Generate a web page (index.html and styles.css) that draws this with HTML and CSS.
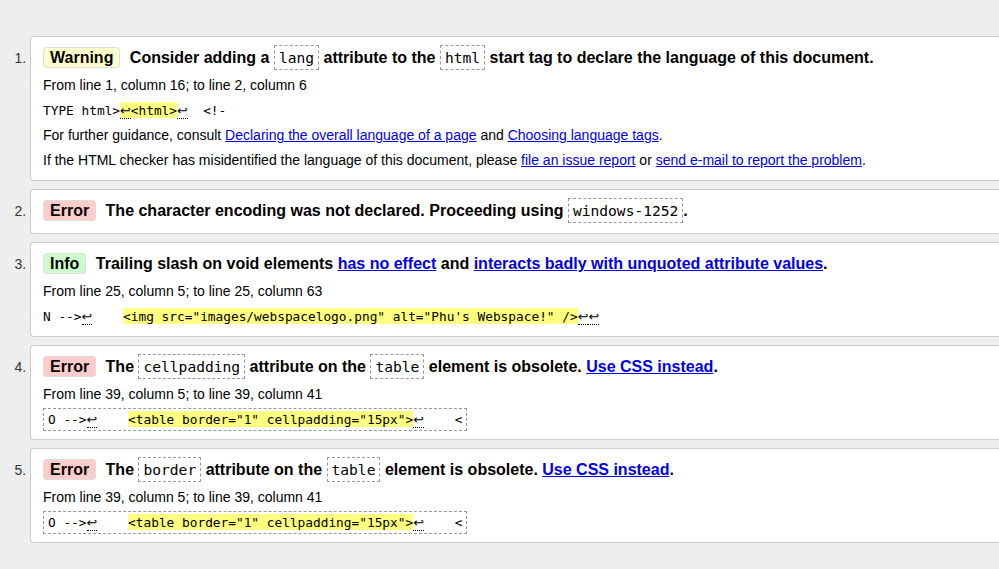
FILE: index.html
```html
<!DOCTYPE html>
<html lang="en">
<head>
<meta charset="utf-8">
<title>Validation results</title>
<link rel="stylesheet" href="styles.css">
</head>
<body>
<ol class="messages">
  <li class="msg">
    <p class="msg-head"><strong class="badge badge-warning">Warning</strong> <span>Consider adding a <code class="kw">lang</code> attribute to the <code class="kw">html</code> start tag to declare the language of this document.</span></p>
    <p class="loc">From line 1, column 16; to line 2, column 6</p>
    <p class="extract"><code class="src">TYPE html&gt;<mark><b class="lf">↩</b>&lt;html&gt;</mark><b class="lf">↩</b>  &lt;!-</code></p>
    <p class="note">For further guidance, consult <a href="#">Declaring the overall language of a page</a> and <a href="#">Choosing language tags</a>.</p>
    <p class="note">If the HTML checker has misidentified the language of this document, please <a href="#">file an issue report</a> or <a href="#">send e-mail to report the problem</a>.</p>
  </li>
  <li class="msg">
    <p class="msg-head"><strong class="badge badge-error">Error</strong> <span>The character encoding was not declared. Proceeding using <code class="kw">windows-1252</code>.</span></p>
  </li>
  <li class="msg">
    <p class="msg-head"><strong class="badge badge-info">Info</strong> <span>Trailing slash on void elements <a href="#">has no effect</a> and <a href="#">interacts badly with unquoted attribute values</a>.</span></p>
    <p class="loc">From line 25, column 5; to line 25, column 63</p>
    <p class="extract"><code class="src">N --&gt;<b class="lf">↩</b>    <mark>&lt;img src="images/webspacelogo.png" alt="Phu's Webspace!" /&gt;</mark><b class="lf">↩</b><b class="lf">↩</b></code></p>
  </li>
  <li class="msg">
    <p class="msg-head"><strong class="badge badge-error">Error</strong> <span>The <code class="kw">cellpadding</code> attribute on the <code class="kw">table</code> element is obsolete. <a href="#">Use CSS instead</a>.</span></p>
    <p class="loc">From line 39, column 5; to line 39, column 41</p>
    <p class="extract"><code class="src src-boxed">O --&gt;<b class="lf">↩</b>    <mark>&lt;table border="1" cellpadding="15px"&gt;</mark><b class="lf">↩</b>    &lt;</code></p>
  </li>
  <li class="msg">
    <p class="msg-head"><strong class="badge badge-error">Error</strong> <span>The <code class="kw">border</code> attribute on the <code class="kw">table</code> element is obsolete. <a href="#">Use CSS instead</a>.</span></p>
    <p class="loc">From line 39, column 5; to line 39, column 41</p>
    <p class="extract"><code class="src src-boxed">O --&gt;<b class="lf">↩</b>    <mark>&lt;table border="1" cellpadding="15px"&gt;</mark><b class="lf">↩</b>    &lt;</code></p>
  </li>
</ol>
</body>
</html>
```

FILE: styles.css
```css
html {
  overflow: hidden;
}

body {
  margin: 0;
  background: #eeeeee;
  font-family: "Liberation Sans", Arial, sans-serif;
  color: #000;
}

.messages {
  margin: 36px 0 0;
  padding: 0 0 0 30px;
  font-size: 14px;
}

.msg {
  background: #fff;
  border: 1px solid #cccccc;
  border-right: none;
  border-radius: 4px 0 0 4px;
  padding: 9px 12px 10px;
  margin-bottom: 8px;
}

.msg::marker {
  color: #333;
}

.msg p {
  margin: 0;
}

.msg-head {
  font-size: 16px;
  font-weight: bold;
  line-height: 24px;
}

.badge {
  padding: 1px 6px;
  margin-right: 5px;
  border: 1px solid #dddddd;
  border-radius: 4px;
  line-height: 1;
}

.badge-warning {
  background: #ffffcc;
}

.badge-error {
  background: #ffcccc;
}

.badge-info {
  background: #ccffcc;
}

.kw {
  font-family: "DejaVu Sans Mono", monospace;
  font-weight: normal;
  font-size: 14.6px;
  line-height: 1;
  padding: 3px 4px;
  border: 1px dashed #999999;
}

a {
  color: #0000ee;
}

.loc,
.note,
.extract {
  margin-top: 6px !important;
  line-height: 19px;
}

.src {
  font-family: "DejaVu Sans Mono", monospace;
  font-size: 12.8px;
  line-height: 1;
  white-space: pre;
  color: #000;
}

.src-boxed {
  padding: 3px 4px;
  border: 1px dashed #999999;
}

.src mark {
  background: #ffff80;
  color: #000;
  padding: 1px 0 0;
}

.lf {
  font-family: "DejaVu Sans", sans-serif;
  font-weight: normal;
  line-height: 1;
  border-bottom: 1px dotted #000;
}
```
